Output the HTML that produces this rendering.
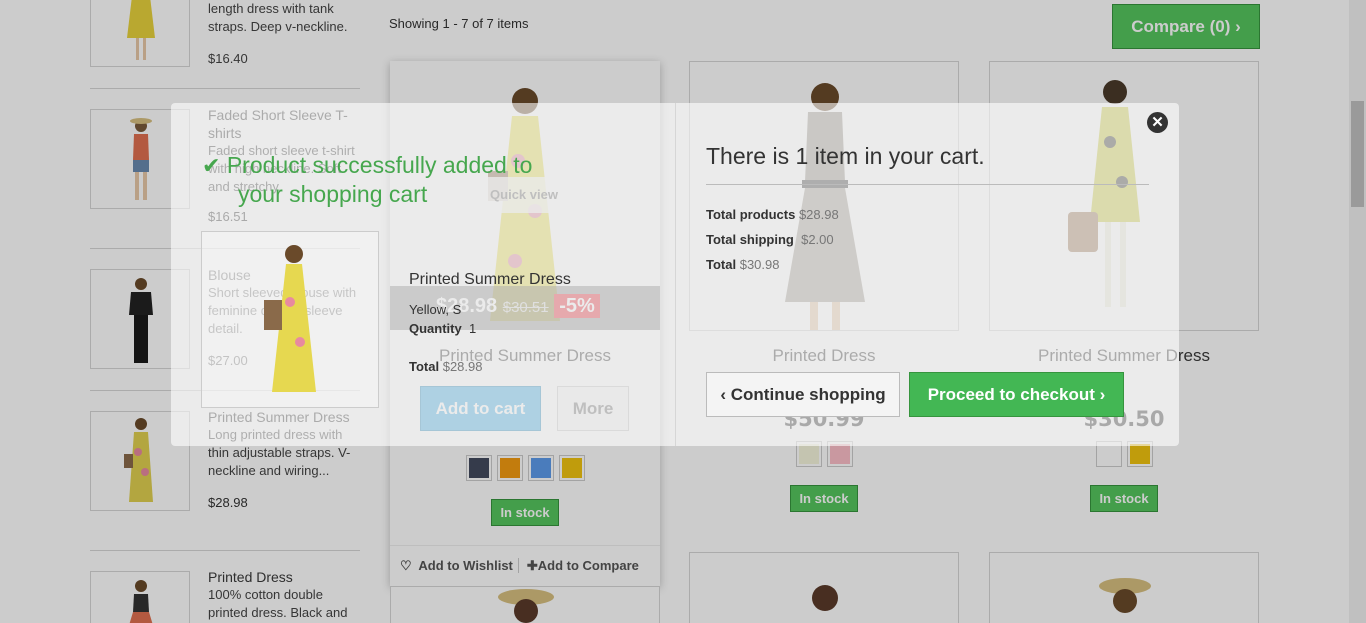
<!DOCTYPE html>
<html style="height:623px;overflow:hidden"><head><meta charset="utf-8"><style>
*{box-sizing:border-box;margin:0;padding:0}
html,body{width:1366px;height:623px;overflow:hidden}
body{position:relative;background:#fff;font-family:"Liberation Sans",Arial,sans-serif;color:#333}
#wrap{position:absolute;left:0;top:0;width:1366px;height:623px;overflow:hidden}
.abs{position:absolute}
.sb-img{position:absolute;left:0;width:100px;height:100px;border:1px solid #d6d6d6;background:#fff;overflow:hidden}
.sb-t{position:absolute;left:118px;width:150px;font-size:14px;line-height:18px;color:#3a3a3a}
.sb-t .d{font-size:13px;color:#444}
.sb-t .p{font-size:13px;color:#333}
.sep{position:absolute;left:90px;width:270px;height:1px;background:#d6d6d6}
.card{position:absolute;width:270px}
.cimg{position:absolute;top:0;left:0;width:270px;height:270px;border:1px solid #d6d6d6;background:#fff;overflow:hidden}
.name{position:absolute;top:285px;width:100%;text-align:center;font-size:17px;color:#3a3a3a}
.price{position:absolute;top:346px;width:100%;text-align:center;font-size:21px;font-weight:bold;color:#333;font-family:"DejaVu Sans",sans-serif}
.sw{position:absolute;top:380px;display:flex;gap:5px;width:100%;justify-content:center}
.sw span{width:26px;height:26px;border:1px solid #ccc;display:block;outline:2px solid #fff;outline-offset:-3px}
.stock{position:absolute;width:68px;height:27px;background:#55c65e;border:1px solid #36943e;color:#fff;font-size:13px;font-weight:bold;text-align:center;line-height:25px}
#ov{position:absolute;left:0;top:0;width:1366px;height:623px;background:rgba(0,0,0,0.2)}
#modal{position:absolute;left:171px;top:103px;width:1008px;height:343px;background:rgba(255,255,255,0.6);border-radius:4px}
.btn{position:absolute;font-weight:bold;text-align:center}
</style></head><body><div id="wrap">

<div class="sb-img" style="left:90px;top:-33px"><svg width="100" height="100"><circle cx="50" cy="10" r="5" fill="#8a6a4a"/><path d="M42 20 L58 20 L64 70 L36 70Z" fill="#e8d23c"/><rect x="45" y="70" width="3" height="22" fill="#e8c8a8"/><rect x="52" y="70" width="3" height="22" fill="#e8c8a8"/></svg></div>
<div class="sb-t" style="left:208px;top:0px;font-size:13px;color:#444">length dress with tank<br>straps. Deep v-neckline.<div style="margin-top:14px">$16.40</div></div>
<div class="sep" style="top:88px"></div>

<div class="sb-img" style="left:90px;top:109px"><svg width="100" height="100"><circle cx="50" cy="16" r="6" fill="#7a5a3a"/><ellipse cx="50" cy="11" rx="11" ry="3" fill="#d8c080"/><path d="M43 24 L57 24 L58 50 L42 50Z" fill="#e07050"/><path d="M42 50 L58 50 L58 62 L42 62Z" fill="#6a8ab0"/><rect x="44" y="62" width="4" height="28" fill="#e8c8a8"/><rect x="52" y="62" width="4" height="28" fill="#e8c8a8"/></svg></div>
<div class="sb-t" style="left:208px;top:106px">Faded Short Sleeve T-shirts<div class="d">Faded short sleeve t-shirt with high neckline. Soft and stretchy.</div><div class="p" style="margin-top:12px">$16.51</div></div>
<div class="sep" style="top:248px"></div>

<div class="sb-img" style="left:90px;top:269px"><svg width="100" height="100"><circle cx="50" cy="14" r="6" fill="#6a4a2a"/><path d="M40 22 L60 22 L62 45 L38 45Z" fill="#222"/><rect x="43" y="45" width="14" height="48" fill="#1a1a1a"/></svg></div>
<div class="sb-t" style="left:208px;top:266px">Blouse<div class="d">Short sleeved blouse with feminine draped sleeve detail.</div><div class="p" style="margin-top:14px">$27.00</div></div>
<div class="sep" style="top:390px"></div>

<div class="sb-img" style="left:90px;top:411px"><svg width="100" height="100"><circle cx="50" cy="12" r="6" fill="#6a4a2a"/><path d="M43 20 L57 20 L62 90 L38 90Z" fill="#e0d050"/><circle cx="47" cy="40" r="4" fill="#e88aa0"/><circle cx="54" cy="60" r="4" fill="#e88aa0"/><rect x="33" y="42" width="9" height="14" fill="#8a6a4a"/></svg></div>
<div class="sb-t" style="left:208px;top:408px">Printed Summer Dress<div class="d">Long printed dress with thin adjustable straps. V-neckline and wiring...</div><div class="p" style="margin-top:14px">$28.98</div></div>
<div class="sep" style="top:550px"></div>

<div class="sb-img" style="left:90px;top:571px"><svg width="100" height="100"><circle cx="50" cy="14" r="6" fill="#6a4a2a"/><path d="M43 22 L57 22 L58 40 L42 40Z" fill="#333"/><path d="M42 40 L58 40 L64 60 L36 60Z" fill="#e07050"/></svg></div>
<div class="sb-t" style="left:208px;top:568px">Printed Dress<div class="d">100% cotton double printed dress. Black and</div></div>

<div class="abs" style="left:389px;top:16px;font-size:13px;color:#333">Showing 1 - 7 of 7 items</div>
<div class="btn" style="left:1112px;top:4px;width:148px;height:45px;background:#55c65e;border:1px solid #36943e;color:#fff;font-size:17px;line-height:43px">Compare (0) &#x203A;</div>

<div class="card" style="left:390px;top:61px;height:525px;box-shadow:0 2px 8px rgba(0,0,0,.25);background:#fff">
 <div class="cimg" style="border:none"><svg width="270" height="270"><circle cx="135" cy="40" r="13" fill="#6a4a2a"/><path d="M122 55 L148 55 L170 260 L100 260Z" fill="#ece050"/><circle cx="128" cy="100" r="7" fill="#e88aa0"/><circle cx="145" cy="150" r="7" fill="#e88aa0"/><circle cx="125" cy="200" r="7" fill="#e88aa0"/><rect x="98" y="110" width="20" height="30" fill="#8a6a4a"/></svg>
  <div class="abs" style="left:0;top:225px;width:270px;height:44px;background:rgba(60,60,60,.5)"></div>
  <div class="abs" style="left:46px;top:234px;font-size:20px;font-weight:bold;color:#fff">$28.98 <span style="font-size:15px;font-weight:normal;text-decoration:line-through;color:#ddd">$30.51</span> <span style="background:#f13340;padding:1px 5px">-5%</span></div>
  <div class="abs" style="left:80px;top:116px;width:108px;height:36px;background:rgba(255,255,255,.8);font-size:13px;font-weight:bold;color:#777;text-align:center;line-height:36px">Quick view</div>
 </div>
 <div class="name" style="top:285px">Printed Summer Dress</div>
 <div class="btn" style="left:30px;top:325px;width:121px;height:45px;background:#43b0e8;border:1px solid #2a8cc0;color:#fff;font-size:17px;line-height:43px">Add to cart</div>
 <div class="btn" style="left:167px;top:325px;width:72px;height:45px;background:#fbfbfb;border:1px solid #ccc;color:#777;font-size:17px;line-height:43px">More</div>
 <div class="sw" style="top:394px"><span style="background:#434a5e"></span><span style="background:#f39c11"></span><span style="background:#5d9cec"></span><span style="background:#f1c40f"></span></div>
 <div class="stock" style="left:101px;top:438px">In stock</div>
 <div class="abs" style="left:0;top:484px;width:270px;height:41px;border-top:1px solid #eee;font-size:13px;font-weight:bold;color:#555;line-height:40px"><span style="margin-left:10px">&#9825;&nbsp; Add to Wishlist</span><span style="border-left:1px solid #ccc;margin-left:5px;padding-left:8px">&#10010;Add to Compare</span></div>
</div>

<div class="card" style="left:689px;top:61px">
 <div class="cimg"><svg width="270" height="270"><circle cx="135" cy="35" r="14" fill="#6a4a2a"/><path d="M118 50 L152 50 L155 120 L115 120Z" fill="#9a948a"/><rect x="112" y="118" width="46" height="8" fill="#444"/><path d="M115 126 L155 126 L175 240 L95 240Z" fill="#a8a298"/><rect x="120" y="240" width="8" height="30" fill="#e8c8a8"/><rect x="142" y="240" width="8" height="30" fill="#e8c8a8"/></svg></div>
 <div class="name" style="top:285px">Printed Dress</div>
 <div class="price">$50.99</div>
 <div class="sw"><span style="background:#f5f5dc"></span><span style="background:#fcbfc8"></span></div>
 <div class="stock" style="left:101px;top:424px">In stock</div>
</div>

<div class="card" style="left:989px;top:61px">
 <div class="cimg"><svg width="270" height="270"><circle cx="125" cy="30" r="12" fill="#4a3a2a"/><path d="M112 45 L138 45 L150 160 L100 160Z" fill="#cfcf40"/><circle cx="120" cy="80" r="6" fill="#3a3a30"/><circle cx="132" cy="120" r="6" fill="#3a3a30"/><rect x="78" y="150" width="30" height="40" rx="4" fill="#a07a5a"/><rect x="115" y="160" width="6" height="85" fill="#eed"/><rect x="130" y="160" width="6" height="85" fill="#eed"/></svg></div>
 <div class="name" style="top:285px">Printed Summer Dress</div>
 <div class="price">$30.50</div>
 <div class="sw"><span style="background:#fff"></span><span style="background:#f1c40f"></span></div>
 <div class="stock" style="left:101px;top:424px">In stock</div>
</div>

<div class="cimg" style="left:390px;top:586px;height:60px;position:absolute"><svg width="270" height="40"><ellipse cx="135" cy="10" rx="28" ry="8" fill="#d8c080"/><circle cx="135" cy="24" r="12" fill="#5a3a2a"/></svg></div>
<div class="cimg" style="left:689px;top:552px;height:80px;position:absolute"><svg width="270" height="80"><circle cx="135" cy="45" r="13" fill="#5a3a2a"/></svg></div>
<div class="cimg" style="left:989px;top:552px;height:80px;position:absolute"><svg width="270" height="80"><ellipse cx="135" cy="33" rx="26" ry="8" fill="#d8c080"/><circle cx="135" cy="48" r="12" fill="#6a4a2a"/></svg></div>

<div class="abs" style="left:1349px;top:0;width:17px;height:623px;background:#f1f1f1"></div>
<div class="abs" style="left:1351px;top:101px;width:13px;height:106px;background:#c1c1c1"></div>

<div id="ov"></div>

<div id="modal">
 <div class="abs" style="left:504px;top:0;width:1px;height:343px;background:#d6d6d6"></div>
 <div class="abs" style="left:30px;top:128px;width:178px;height:177px;border:1px solid #ccc;background:rgba(255,255,255,.3)"><svg width="178" height="177"><circle cx="92" cy="22" r="9" fill="#6a4a2a"/><path d="M84 32 L100 32 L114 160 L70 160Z" fill="#e6d850"/><circle cx="88" cy="70" r="5" fill="#e88aa0"/><circle cx="98" cy="110" r="5" fill="#e88aa0"/><rect x="62" y="68" width="18" height="30" fill="#8a6a4a"/></svg></div>
 <div class="abs" style="left:31px;top:48px;font-size:23px;color:#46a74e;line-height:29px"><span style="font-size:22px">&#10004;</span> Product successfully added to<br><span style="margin-left:36px">your shopping cart</span></div>
 <div class="abs" style="left:238px;top:168px;font-size:16px;color:#333">Printed Summer Dress</div>
 <div class="abs" style="left:238px;top:197px;font-size:13px;color:#333;line-height:19px">Yellow, S<br><b>Quantity</b>&nbsp; 1<br><br><b>Total</b> <span style="color:#777">$28.98</span></div>
 <div class="abs" style="left:535px;top:40px;font-size:23px;color:#333">There is 1 item in your cart.</div>
 <div class="abs" style="left:535px;top:81px;width:443px;height:1px;background:#bbb"></div>
 <div class="abs" style="left:535px;top:99px;font-size:13px;color:#333;line-height:25px"><b>Total products</b> <span style="color:#777">$28.98</span><br><b>Total shipping</b>&nbsp; <span style="color:#777">$2.00</span><br><b>Total</b> <span style="color:#777">$30.98</span></div>
 <div class="abs" style="left:976px;top:9px;width:21px;height:21px;border-radius:50%;background:#333;color:#fff;font-size:15px;font-weight:bold;text-align:center;line-height:21px">&#10005;</div>
 <div class="btn" style="left:535px;top:269px;width:194px;height:45px;background:#f4f4f4;border:1px solid #bbb;color:#333;font-size:17px;line-height:43px">&#8249; Continue shopping</div>
 <div class="btn" style="left:738px;top:269px;width:215px;height:45px;background:#43b754;border:1px solid #36943e;color:#fff;font-size:17px;line-height:43px">Proceed to checkout &#8250;</div>
</div>
</div></body></html>
